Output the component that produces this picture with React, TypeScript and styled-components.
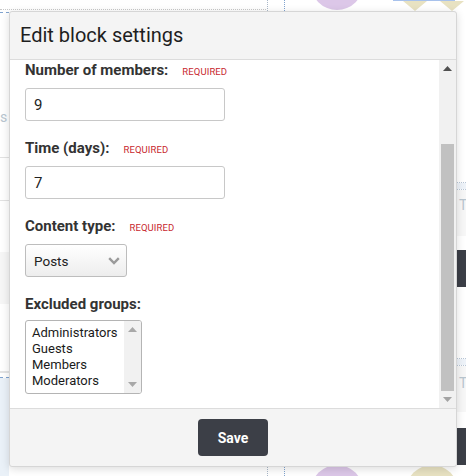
import React from "react";
import styled, { createGlobalStyle } from "styled-components";

const Global = createGlobalStyle`
  html, body { margin: 0; padding: 0; }
  body {
    width: 466px; height: 476px; overflow: hidden; background: #ffffff;
    font-family: Roboto, "Liberation Sans", Arial, sans-serif;
  }
  * { box-sizing: border-box; }
`;

const Page = styled.div`
  position: relative;
  width: 466px;
  height: 476px;
  overflow: hidden;
  background: #fff;
`;

/* ---------- faint page behind the dialog ---------- */
const Decor = styled.div<{ $x: number; $y: number; $w: number; $h: number }>`
  position: absolute;
  left: ${(p) => p.$x}px;
  top: ${(p) => p.$y}px;
  width: ${(p) => p.$w}px;
  height: ${(p) => p.$h}px;
`;
const Fill = styled(Decor)<{ $c: string }>`
  background: ${(p) => p.$c};
`;
const DotH = styled(Decor)<{ $c?: string }>`
  border-top: 1px dotted ${(p) => p.$c || "#c8c8c8"};
`;
const DashH = styled(Decor)`
  border-top: 1px dashed #7fa3cf;
`;
const DotV = styled(Decor)<{ $c?: string }>`
  border-left: 1px dotted ${(p) => p.$c || "#c8c8c8"};
`;
const Circle = styled(Decor)<{ $c: string }>`
  border-radius: 50%;
  background: ${(p) => p.$c};
`;
const Tri = styled(Decor)`
  background: #e8e2c2;
  clip-path: polygon(0 0, 100% 0, 50% 100%);
`;
const Faint = styled.span<{ $x: number; $y: number }>`
  position: absolute;
  left: ${(p) => p.$x}px;
  top: ${(p) => p.$y}px;
  font-size: 14px;
  color: #b9c6d0;
`;

/* ---------- dialog ---------- */
const Dialog = styled.div`
  position: absolute;
  left: 9px;
  top: 11px;
  width: 448px;
  height: 456px;
  display: flex;
  flex-direction: column;
  background: #f4f4f4;
  border: 1px solid #d6d6d6;
  border-radius: 3px;
  box-shadow: 0 2px 8px rgba(0, 0, 0, 0.14);
  overflow: hidden;
`;

const Header = styled.div`
  height: 48px;
  flex: none;
  display: flex;
  align-items: center;
  padding: 0 0 2px 10px;
  border-bottom: 1px solid #dcdcdc;
`;

const Title = styled.h2`
  margin: 0;
  font-size: 20px;
  font-weight: 400;
  color: #1e1e1e;
`;

const BodyRow = styled.div`
  flex: 1;
  display: flex;
  background: #fff;
  min-height: 0;
`;

const Content = styled.div`
  flex: 1;
  display: flex;
  flex-direction: column;
  padding: 1px 0 0 15px;
`;

const Field = styled.div<{ $gap?: number }>`
  display: flex;
  flex-direction: column;
  gap: ${(p) => p.$gap ?? 9}px;
  margin-bottom: 18px;
`;

const LabelRow = styled.div`
  display: flex;
  align-items: baseline;
  gap: 14px;
`;

const Label = styled.label`
  font-size: 15px;
  font-weight: 700;
  color: #333;
`;

const Required = styled.span`
  font-size: 9.5px;
  color: #c8282f;
  letter-spacing: 0.1px;
  text-transform: uppercase;
`;

const TextInput = styled.div<{ $w: number }>`
  width: ${(p) => p.$w}px;
  height: 33px;
  border: 1px solid #c8c8c8;
  border-radius: 3px;
  background: #fff;
  display: flex;
  align-items: center;
  padding: 0 8px;
  font-size: 15px;
  color: #222;
`;

const Select = styled.div`
  width: 102px;
  height: 33px;
  border: 1px solid #bdbdbd;
  border-radius: 3px;
  background: linear-gradient(#ffffff, #ededed);
  display: flex;
  align-items: center;
  justify-content: space-between;
  padding: 0 6px 0 8px;
  font-size: 13.5px;
  color: #222;
`;

const ListBox = styled.div`
  width: 117px;
  height: 74px;
  border: 1px solid #b4b4b4;
  border-radius: 3px;
  background: #fff;
  display: flex;
  overflow: hidden;
`;

const Options = styled.div`
  flex: 1;
  padding: 4px 0 0 6px;
  display: flex;
  flex-direction: column;
`;

const Option = styled.div`
  font-size: 13px;
  line-height: 16px;
  color: #1a1a1a;
  white-space: nowrap;
`;

const ScrollTrack = styled.div<{ $w: number }>`
  width: ${(p) => p.$w}px;
  flex: none;
  background: #f1f1f1;
  display: flex;
  flex-direction: column;
  align-items: center;
`;

const ArrowBox = styled.div`
  height: 17px;
  width: 100%;
  flex: none;
  display: flex;
  align-items: center;
  justify-content: center;
`;

const Thumb = styled.div`
  width: 13px;
  background: #c1c1c1;
`;

const Spacer = styled.div<{ $h?: number }>`
  flex: ${(p) => (p.$h ? "none" : "1")};
  height: ${(p) => (p.$h ? `${p.$h}px` : "auto")};
`;

const Footer = styled.div`
  height: 58px;
  flex: none;
  border-top: 1px solid #dcdcdc;
  display: flex;
  justify-content: center;
  padding-top: 10px;
`;

const SaveButton = styled.button`
  width: 70px;
  height: 37px;
  border: none;
  border-radius: 4px;
  background: #3c3f47;
  color: #fff;
  font-family: inherit;
  font-size: 14px;
  font-weight: 700;
  cursor: pointer;
`;

const Arrow = ({ up, color }: { up?: boolean; color: string }) => (
  <svg width="9" height="5" viewBox="0 0 9 5">
    <polygon points={up ? "0,5 9,5 4.5,0" : "0,0 9,0 4.5,5"} fill={color} />
  </svg>
);

const Chevron = () => (
  <svg width="12" height="8" viewBox="0 0 12 8">
    <polyline points="1.2,1.2 6,6 10.8,1.2" fill="none" stroke="#9a9a9a" strokeWidth="2.4" />
  </svg>
);

export default function App() {
  return (
    <Page>
      <Global />
      {/* background page */}
      <DotH $x={0} $y={9} $w={266} $h={1} />
      <DashH $x={0} $y={12} $w={9} $h={1} />
      <DotV $x={267} $y={0} $w={1} $h={11} $c="#aab8c8" />
      <DotV $x={284} $y={0} $w={1} $h={11} $c="#7fa3cf" />
      <DotV $x={267} $y={452} $w={1} $h={24} $c="#aab8c8" />
      <DotV $x={284} $y={452} $w={1} $h={24} $c="#7fa3cf" />
      <Circle $x={311} $y={-42} $w={52} $h={52} $c="#dcc7e8" />
      <Circle $x={311} $y={465} $w={52} $h={52} $c="#dcc7e8" />
      <Circle $x={406} $y={465} $w={52} $h={52} $c="#e8e2c2" />
      <Fill $x={393} $y={0} $w={62} $h={1} $c="#a8c2ec" />
      <Tri $x={403} $y={1} $w={24} $h={10} />
      <Tri $x={440} $y={1} $w={24} $h={10} />
      <Faint $x={0} $y={109}>s</Faint>
      <Fill $x={0} $y={157} $w={9} $h={1} $c="#e2e2e2" />
      <Fill $x={0} $y={200} $w={9} $h={1} $c="#e2e2e2" />
      <Fill $x={0} $y={252} $w={9} $h={52} $c="#f6f6f6" />
      <Fill $x={0} $y={371} $w={9} $h={2} $c="#e4e4e4" />
      <DashH $x={0} $y={377} $w={9} $h={1} />
      <Fill $x={0} $y={378} $w={9} $h={98} $c="#eaf1f8" />
      <DotH $x={457} $y={182} $w={9} $h={1} $c="#b8c6d6" />
      <Fill $x={457} $y={183} $w={9} $h={6} $c="#eef3f9" />
      <DotH $x={457} $y={189} $w={9} $h={1} $c="#b8c6d6" />
      <Fill $x={457} $y={190} $w={9} $h={46} $c="#f7f7f7" />
      <Faint $x={459} $y={197}>T</Faint>
      <Fill $x={457} $y={250} $w={9} $h={37} $c="#3c3f47" />
      <DotH $x={457} $y={358} $w={9} $h={1} $c="#b8c6d6" />
      <Fill $x={457} $y={359} $w={9} $h={6} $c="#eef3f9" />
      <DotH $x={457} $y={365} $w={9} $h={1} $c="#b8c6d6" />
      <Fill $x={457} $y={366} $w={9} $h={46} $c="#f7f7f7" />
      <Faint $x={459} $y={375}>T</Faint>
      <Fill $x={457} $y={428} $w={9} $h={37} $c="#3c3f47" />

      <Dialog role="dialog" aria-label="Edit block settings">
        <Header>
          <Title>Edit block settings</Title>
        </Header>
        <BodyRow>
          <Content>
            <Field>
              <LabelRow>
                <Label>Number of members:</Label>
                <Required>Required</Required>
              </LabelRow>
              <TextInput $w={200}>9</TextInput>
            </Field>
            <Field>
              <LabelRow>
                <Label>Time (days):</Label>
                <Required>Required</Required>
              </LabelRow>
              <TextInput $w={200}>7</TextInput>
            </Field>
            <Field>
              <LabelRow>
                <Label>Content type:</Label>
                <Required>Required</Required>
              </LabelRow>
              <Select>
                <span>Posts</span>
                <Chevron />
              </Select>
            </Field>
            <Field $gap={7}>
              <LabelRow>
                <Label>Excluded groups:</Label>
              </LabelRow>
              <ListBox role="listbox">
                <Options>
                  <Option>Administrators</Option>
                  <Option>Guests</Option>
                  <Option>Members</Option>
                  <Option>Moderators</Option>
                </Options>
                <ScrollTrack $w={17}>
                  <ArrowBox>
                    <Arrow up color="#a8a8a8" />
                  </ArrowBox>
                  <Spacer />
                  <ArrowBox>
                    <Arrow color="#a8a8a8" />
                  </ArrowBox>
                </ScrollTrack>
              </ListBox>
            </Field>
          </Content>
          <ScrollTrack $w={17}>
            <ArrowBox>
              <Arrow up color="#505050" />
            </ArrowBox>
            <Spacer $h={67} />
            <Thumb style={{ height: 249 }} />
            <Spacer />
            <ArrowBox>
              <Arrow color="#a3a3a3" />
            </ArrowBox>
          </ScrollTrack>
        </BodyRow>
        <Footer>
          <SaveButton>Save</SaveButton>
        </Footer>
      </Dialog>
    </Page>
  );
}
